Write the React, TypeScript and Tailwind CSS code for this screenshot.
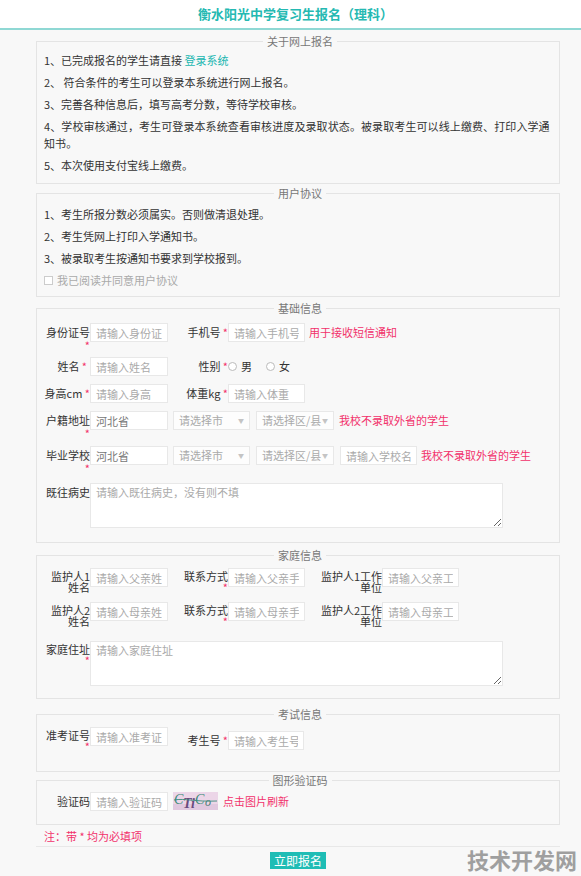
import React from 'react';

const FONT = { fontFamily: '"Noto Sans CJK SC", "Noto Sans", sans-serif' };

function Fs({ title, className, children }: { title: string; className: string; children: React.ReactNode }) {
  return (
    <fieldset className={className}>
      <legend className="mx-auto px-[4px] text-[11px] leading-[17px] text-[#777]">{title}</legend>
      {children}
    </fieldset>
  );
}

function Star() {
  return <span className="text-[#f2316b]"> *</span>;
}

function Field({ placeholder, value, w = 'w-[78px]' }: { placeholder?: string; value?: string; w?: string }) {
  return (
    <input
      placeholder={placeholder}
      defaultValue={value}
      className={`${w} h-[19px] shrink-0 border border-[#e8e8e8] bg-white px-[5px] text-[11px] text-[#777] placeholder:text-[#aaa] outline-none`}
    />
  );
}

function Select({ text, w }: { text: string; w: string }) {
  return (
    <div className={`${w} h-[19px] shrink-0 flex items-center justify-between whitespace-nowrap overflow-hidden border border-[#e8e8e8] bg-[#fdfdfd] pl-[5px] pr-[5px] text-[11px] text-[#aaa]`}>
      <span className="leading-[17px]">{text}</span>
      <span className="text-[6px] text-[#c4c4c4]">▼</span>
    </div>
  );
}

function Radio({ label }: { label: string }) {
  return (
    <span className="flex items-center">
      <span className="w-[9px] h-[9px] rounded-full border border-[#bbb] bg-white" />
      <span className="ml-[4px] text-[11px] text-[#333]">{label}</span>
    </span>
  );
}

const fsClass = 'border border-[#e4e4e4] pl-[7px] pr-[3px]';

export default function App() {
  return (
    <div className="relative min-h-[876px] bg-[#f8f8f8] text-[11px] text-[#333]" style={FONT}>
      {/* Header */}
      <div className="h-[30px] bg-white border-b-2 border-[#8fd8d4] flex items-center justify-center pl-[10px]">
        <h1 className="text-[13px] font-bold text-[#25b9b2] leading-[16px]">衡水阳光中学复习生报名（理科）</h1>
      </div>

      <div className="ml-[36px] w-[524px] pt-[3px]">
        {/* 关于网上报名 */}
        <Fs title="关于网上报名" className={`${fsClass} pt-[2px] pb-[4px]`}>
          <p className="leading-[17px] mb-[5px]">1、已完成报名的学生请直接 <span className="text-[#20b6b0]">登录系统</span></p>
          <p className="leading-[17px] mb-[5px]">2、 符合条件的考生可以登录本系统进行网上报名。</p>
          <p className="leading-[17px] mb-[5px]">3、完善各种信息后，填写高考分数，等待学校审核。</p>
          <p className="leading-[17px] mb-[5px] tracking-[0.1px]">
            <span className="whitespace-nowrap">4、学校审核通过，考生可登录本系统查看审核进度及录取状态。被录取考生可以线上缴费、打印入学通</span>
            <br />
            知书。
          </p>
          <p className="leading-[17px] mb-[5px]">5、本次使用支付宝线上缴费。</p>
        </Fs>

        {/* 用户协议 */}
        <Fs title="用户协议" className={`${fsClass} mt-[1px] pt-[4px] pb-[7px]`}>
          <p className="leading-[17px] mb-[5px]">1、考生所报分数必须属实。否则做清退处理。</p>
          <p className="leading-[17px] mb-[5px]">2、考生凭网上打印入学通知书。</p>
          <p className="leading-[17px] mb-[5px]">3、被录取考生按通知书要求到学校报到。</p>
          <label className="flex items-center leading-[17px] text-[#aaa]">
            <span className="w-[9px] h-[9px] border border-[#ccc] bg-white" />
            <span className="ml-[4px]">我已阅读并同意用户协议</span>
          </label>
        </Fs>

        {/* 基础信息 */}
        <Fs title="基础信息" className={`${fsClass} mt-[3px] pt-[6px] pb-[14px]`}>
          <div className="flex items-start mb-[5px]">
            <span className="w-[46px] shrink-0 text-right pt-[3px] leading-[13px]">身份证号<Star /></span>
            <Field placeholder="请输入身份证号" />
            <span className="ml-[14px] w-[46px] shrink-0 text-right pt-[3px] leading-[13px]">手机号<Star /></span>
            <Field placeholder="请输入手机号" w="w-[77px]" />
            <span className="ml-[4px] pt-[3px] leading-[13px] text-[#f2316b]">用于接收短信通知</span>
          </div>
          <div className="flex items-start mb-[8px]">
            <span className="w-[46px] shrink-0 text-right pt-[3px] leading-[13px] pr-[3px]">姓名<Star /></span>
            <Field placeholder="请输入姓名" />
            <span className="ml-[14px] w-[46px] shrink-0 text-right pt-[3px] leading-[13px]">性别<Star /></span>
            <div className="flex items-center h-[19px] gap-[14px]">
              <Radio label="男" />
              <Radio label="女" />
            </div>
          </div>
          <div className="flex items-start mb-[8px]">
            <span className="w-[46px] shrink-0 text-right pt-[3px] leading-[13px] whitespace-nowrap">身高cm<Star /></span>
            <Field placeholder="请输入身高" />
            <span className="ml-[14px] w-[46px] shrink-0 text-right pt-[3px] leading-[13px] whitespace-nowrap">体重kg<Star /></span>
            <Field placeholder="请输入体重" w="w-[77px]" />
          </div>
          <div className="flex items-start mb-[6px]">
            <span className="w-[46px] shrink-0 text-right pt-[3px] leading-[13px]">户籍地址<Star /></span>
            <Field value="河北省" />
            <div className="ml-[5px]"><Select text="请选择市" w="w-[77px]" /></div>
            <div className="ml-[6px]"><Select text="请选择区/县" w="w-[78px]" /></div>
            <span className="ml-[5px] pt-[3px] leading-[13px] text-[#f2316b]">我校不录取外省的学生</span>
          </div>
          <div className="flex items-start mb-[8px]">
            <span className="w-[46px] shrink-0 text-right pt-[3px] leading-[13px]">毕业学校<Star /></span>
            <Field value="河北省" />
            <div className="ml-[5px]"><Select text="请选择市" w="w-[77px]" /></div>
            <div className="ml-[6px]"><Select text="请选择区/县" w="w-[78px]" /></div>
            <div className="ml-[6px]"><Field placeholder="请输入学校名称" w="w-[77px]" /></div>
            <span className="ml-[4px] pt-[3px] leading-[13px] text-[#f2316b] whitespace-nowrap">我校不录取外省的学生</span>
          </div>
          <div className="flex items-start">
            <span className="w-[46px] shrink-0 text-right pt-[3px] leading-[13px]">既往病史</span>
            <textarea
              placeholder="请输入既往病史，没有则不填"
              className="w-[413px] h-[45px] border border-[#e8e8e8] bg-white px-[5px] py-[1px] text-[11px] leading-[15px] placeholder:text-[#aaa] outline-none"
            />
          </div>
        </Fs>

        {/* 家庭信息 */}
        <Fs title="家庭信息" className={`${fsClass} mt-[4px] pt-[4px] pb-[12px]`}>
          <div className="flex items-start mb-[9px]">
            <span className="w-[46px] shrink-0 text-right pt-[3px] leading-[11px]">监护人1姓名</span>
            <Field placeholder="请输入父亲姓名" />
            <span className="ml-[14px] w-[46px] shrink-0 text-right pt-[3px] leading-[11px]">联系方式<Star /></span>
            <Field placeholder="请输入父亲手机号" w="w-[77px]" />
            <span className="ml-[12px] w-[65px] shrink-0 text-right pt-[3px] leading-[11px]">监护人1工作单位</span>
            <Field placeholder="请输入父亲工作单位" w="w-[77px]" />
          </div>
          <div className="flex items-start mb-[14px]">
            <span className="w-[46px] shrink-0 text-right pt-[3px] leading-[11px]">监护人2姓名</span>
            <Field placeholder="请输入母亲姓名" />
            <span className="ml-[14px] w-[46px] shrink-0 text-right pt-[3px] leading-[11px]">联系方式<Star /></span>
            <Field placeholder="请输入母亲手机号" w="w-[77px]" />
            <span className="ml-[12px] w-[65px] shrink-0 text-right pt-[3px] leading-[11px]">监护人2工作单位</span>
            <Field placeholder="请输入母亲工作单位" w="w-[77px]" />
          </div>
          <div className="flex items-start">
            <span className="w-[46px] shrink-0 text-right pt-[3px] leading-[11px]">家庭住址<Star /></span>
            <textarea
              placeholder="请输入家庭住址"
              className="w-[413px] h-[45px] border border-[#e8e8e8] bg-white px-[5px] py-[1px] text-[11px] leading-[15px] placeholder:text-[#aaa] outline-none"
            />
          </div>
        </Fs>

        {/* 考试信息 */}
        <Fs title="考试信息" className={`${fsClass} mt-[7px] pt-[4px] pb-[19px]`}>
          <div className="flex items-start">
            <span className="w-[46px] shrink-0 text-right pt-[3px] leading-[11px]">准考证号<Star /></span>
            <Field placeholder="请输入准考证号" />
            <div className="flex items-start mt-[4px]">
              <span className="ml-[14px] w-[46px] shrink-0 text-right pt-[3px] leading-[13px]">考生号<Star /></span>
              <Field placeholder="请输入考生号" w="w-[76px]" />
            </div>
          </div>
        </Fs>

        {/* 图形验证码 */}
        <Fs title="图形验证码" className={`${fsClass} mt-0 pt-[3px] pb-[13px]`}>
          <div className="flex items-start">
            <span className="w-[46px] shrink-0 text-right pt-[3px] leading-[13px]">验证码</span>
            <Field placeholder="请输入验证码" />
            <svg className="ml-[5px] shrink-0" width="45" height="18" viewBox="0 0 45 18">
              <rect width="45" height="18" fill="#ecd6e8" />
              <rect x="0" y="12" width="45" height="6" fill="#e0c8df" />
              <text x="1" y="12" fontSize="14" fontStyle="italic" fontFamily="Liberation Serif, serif" fill="#3b8a7a">C</text>
              <text x="10" y="16" fontSize="14" fontStyle="italic" fontWeight="bold" fontFamily="Liberation Serif, serif" fill="#6a4a7e">Ti</text>
              <text x="22" y="12" fontSize="14" fontStyle="italic" fontFamily="Liberation Serif, serif" fill="#3b8a7a">C</text>
              <text x="32" y="14" fontSize="12" fontStyle="italic" fontFamily="Liberation Serif, serif" fill="#4a7a72">o</text>
              <path d="M1 8 C12 6 22 10 44 9" stroke="#3b8a7a" strokeWidth="0.9" fill="none" />
            </svg>
            <span className="ml-[5px] pt-[3px] leading-[13px] text-[#f2316b]">点击图片刷新</span>
          </div>
        </Fs>

        <p className="pl-[8px] mt-[3px] leading-[17px] text-[#f2316b]">注：带 * 均为必填项</p>

        <div className="mt-[1px] border-t border-[#e8e8e8] pt-[5px] flex justify-center">
          <button className="h-[17px] w-[56px] bg-[#1fbdb5] text-white text-[12px] leading-[17px]">立即报名</button>
        </div>
      </div>

      <div className="absolute right-[4px] top-[846px] text-[22px] font-bold leading-[26px] text-[#8a8a8a] opacity-80">技术开发网</div>
    </div>
  );
}
